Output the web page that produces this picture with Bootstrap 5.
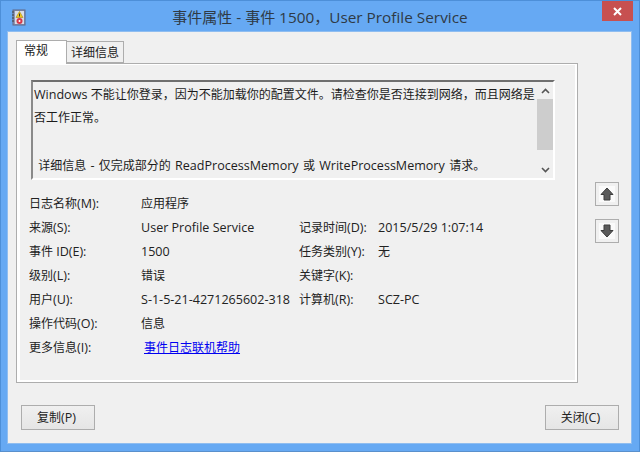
<!DOCTYPE html>
<html lang="zh"><head><meta charset="utf-8"><title>事件属性</title>
<link href="https://cdn.jsdelivr.net/npm/bootstrap@5.3.0/dist/css/bootstrap.min.css" rel="stylesheet">
<style>
html,body{width:640px;height:452px;overflow:hidden;margin:0;background:#66a9f3}
body{font-family:"Open Sans","Noto Sans CJK SC",sans-serif;font-size:12px;color:#222;line-height:16px}
.lat{font-size:12.55px}
.cm{font-family:"Noto Sans CJK TC",sans-serif}
.win-frame{width:640px;height:452px;border:1px solid #4d8fd8;border-bottom-color:#5a90cc;background:#66a9f3}
.win-title{height:30px;padding-left:10px}
.win-name{font-size:15px;color:#2f3a45;left:0;right:0;top:6px;line-height:20px;text-align:center}
.win-name .lat{font-size:15.35px}
.win-close{width:31px;height:20px;background:#c75050;margin-right:6px;border:0;padding:0;border-radius:0}
.win-close:hover{background:#c75050}
.win-client{margin:0 7px 7px 6px;background:#f0f0f0;flex:1;border:1px solid #8fbdf0;padding:8px 12px 12px 8px;min-height:0}
.tab-strip{border:0;height:24px;z-index:1}
.tab-strip .nav-link{font-size:12px;color:#222;border-radius:0;padding:0;margin:0}
.tab-strip .tab-on{width:51px;height:24px;background:#fff;border:1px solid #adadad;border-bottom:0;padding-left:7px;line-height:20px;text-align:left}
.tab-strip .tab-off{width:57px;height:22px;background:#f0f0f0;border:1px solid #adadad;border-left:0;margin-top:1px;line-height:21px;text-align:center}
.tab-panel{width:562px;height:320px;border:1px solid #adadad;margin-top:-1px;background:#f0f0f0;box-shadow:inset 3px 0 0 #fff,inset -2px 0 0 #fff,inset 0 -2px 0 #fff,inset 0 1px 0 #fff;padding:16px 0 0 14px}
.msg-box{width:524px;height:100px;border-top:2px solid #6f6f6f;border-left:2px solid #8a8a8a;border-right:2px solid #fff;border-bottom:2px solid #fff;overflow:hidden}
.msg-text{width:504px;padding:0 0 0 1px;line-height:24px;color:#1c1c1c;white-space:nowrap;overflow:hidden}
.msg-text p{margin:0;height:24px}
.msg-text .msg-wide{word-spacing:1.1px}
.msg-bar{width:16px;background:#f0f0f0}
.bar-arrow{height:17px}
.bar-thumb{height:51px;background:#cdcdcd}
.bar-gap{flex:1}
.info-grid{display:grid;grid-template-columns:112px 149px 9px 79px 1fr;grid-auto-rows:24px;margin:12px 0 0 -2px;width:530px;align-items:center}
.info-cell{white-space:nowrap;overflow:hidden;line-height:24px}
.info-link{color:#0000f0;text-decoration:underline;padding-left:3px}
.side-col{width:24px;margin-left:17px;padding-top:142px;gap:13px}
.move-btn{width:24px;height:24px;padding:0;border:1px solid #adadad;border-radius:0;background:#f0f0f0}
.move-btn:hover{background:#f0f0f0}
.arrow-tile{background:#fafafa}
.foot-row{margin-top:22px;padding:0 0 0 5px;width:603px}
.cmd-btn{width:74px;height:25px;padding:0 3px 0 0;font-size:12px;color:#222;border:1px solid #adadad;border-radius:0;background:linear-gradient(#f0f0f0,#e5e5e5);line-height:23px}
</style></head><body>
<div class="win-frame d-flex flex-column">
  <div class="win-title d-flex justify-content-between position-relative">
    <svg width="15" height="17" viewBox="0 0 15 17" class="mt-2" aria-hidden="true"><rect x="2" y="1" width="12" height="15" fill="#8e97b5" stroke="#5f6785"/><rect x="4" y="2" width="9" height="13" fill="#d9dde8"/><path d="M1 3h2M1 6h2M1 9h2M1 12h2" stroke="#444"/><path d="M8.500 2.500l3.500 6h-7z" fill="#f2c81e" stroke="#a98a10" stroke-width=".6"/><rect x="8" y="4.500" width="1" height="3" fill="#333"/><circle cx="8.500" cy="12" r="3" fill="#d6384a"/><circle cx="8.500" cy="12" r="1" fill="#fff"/></svg>
    <div class="win-name position-absolute">事件属性 <span class="lat">- </span>事件 <span class="lat">1500</span><span class="cm">，</span><span class="lat">User Profile Service</span></div>
    <button class="win-close btn d-flex align-items-center justify-content-center position-relative" aria-label="关闭"><svg width="9" height="9" viewBox="0 0 9 9"><path d="M1 1l7 7M8 1l-7 7" stroke="#fff" stroke-width="2"/></svg></button>
  </div>
  <div class="win-client d-flex flex-column">
    <div class="d-flex">
      <div>
        <ul class="nav tab-strip position-relative">
          <li class="nav-item"><a class="nav-link tab-on" href="#">常规</a></li>
          <li class="nav-item"><a class="nav-link tab-off" href="#">详细信息</a></li>
        </ul>
        <div class="tab-panel">
          <div class="msg-box d-flex">
            <div class="msg-text flex-grow-1">
              <p><span class="lat">Windows </span>不能让你登录<span class="cm">，</span>因为不能加载你的配置文件。请检查你是否连接到网络<span class="cm">，</span>而且网络是</p>
              <p>否工作正常。</p>
              <p></p>
              <p class="msg-wide">&nbsp;详细信息 <span class="lat">- </span>仅完成部分的 <span class="lat">ReadProcessMemory </span>或 <span class="lat">WriteProcessMemory </span>请求。</p>
            </div>
            <div class="msg-bar d-flex flex-column">
              <div class="bar-arrow d-flex align-items-center justify-content-center"><svg width="9" height="6" viewBox="0 0 9 6"><path d="M1 5l3.500-3.500L8 5" fill="none" stroke="#555" stroke-width="1.600"/></svg></div>
              <div class="bar-thumb"></div>
              <div class="bar-gap"></div>
              <div class="bar-arrow d-flex align-items-center justify-content-center"><svg width="9" height="6" viewBox="0 0 9 6"><path d="M1 1l3.500 3.500L8 1" fill="none" stroke="#555" stroke-width="1.600"/></svg></div>
            </div>
          </div>
          <div class="info-grid">
            <div class="info-cell">日志名称<span class="lat">(M):</span></div><div class="info-cell">应用程序</div><div></div><div></div><div></div>
            <div class="info-cell">来源<span class="lat">(S):</span></div><div class="info-cell lat">User Profile Service</div><div></div><div class="info-cell">记录时间<span class="lat">(D):</span></div><div class="info-cell lat">2015/5/29 1:07:14</div>
            <div class="info-cell">事件 <span class="lat">ID(E):</span></div><div class="info-cell lat">1500</div><div></div><div class="info-cell">任务类别<span class="lat">(Y):</span></div><div class="info-cell">无</div>
            <div class="info-cell">级别<span class="lat">(L):</span></div><div class="info-cell">错误</div><div></div><div class="info-cell">关键字<span class="lat">(K):</span></div><div></div>
            <div class="info-cell">用户<span class="lat">(U):</span></div><div class="info-cell lat">S-1-5-21-4271265602-3181</div><div></div><div class="info-cell">计算机<span class="lat">(R):</span></div><div class="info-cell lat">SCZ-PC</div>
            <div class="info-cell">操作代码<span class="lat">(O):</span></div><div class="info-cell">信息</div><div></div><div></div><div></div>
            <div class="info-cell">更多信息<span class="lat">(I):</span></div><div class="info-cell"><a class="info-link" href="#">事件日志联机帮助</a></div><div></div><div></div><div></div>
          </div>
        </div>
      </div>
      <div class="side-col d-flex flex-column">
        <button class="btn move-btn d-flex align-items-center justify-content-center" aria-label="上移"><svg class="arrow-tile" width="16" height="16" viewBox="0 0 16 16"><path d="M8 2L14 8.500H11V14H5V8.500H2z" fill="#5a5a5a" stroke="#3c3c3c"/></svg></button>
        <button class="btn move-btn d-flex align-items-center justify-content-center" aria-label="下移"><svg class="arrow-tile" width="16" height="16" viewBox="0 0 16 16"><path d="M8 14L14 7.500H11V2H5V7.500H2z" fill="#5a5a5a" stroke="#3c3c3c"/></svg></button>
      </div>
    </div>
    <div class="foot-row d-flex justify-content-between">
      <button class="btn cmd-btn">复制<span class="lat">(P)</span></button>
      <button class="btn cmd-btn">关闭<span class="lat">(C)</span></button>
    </div>
  </div>
</div>
<script src="https://cdn.jsdelivr.net/npm/bootstrap@5.3.0/dist/js/bootstrap.bundle.min.js"></script>
</body></html>
